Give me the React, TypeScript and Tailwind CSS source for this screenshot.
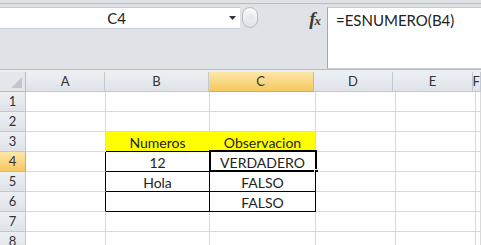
import React from 'react';

type Col = { key: string; w: string };

const cols: Col[] = [
  { key: 'A', w: 'w-[80px]' },
  { key: 'B', w: 'w-[104px]' },
  { key: 'C', w: 'w-[106px]' },
  { key: 'D', w: 'w-[80px]' },
  { key: 'E', w: 'w-[80px]' },
  { key: 'F', w: 'flex-1' },
];

const values: Record<string, string> = {
  B3: 'Numeros',
  C3: 'Observacion',
  B4: '12',
  C4: 'VERDADERO',
  B5: 'Hola',
  C5: 'FALSO',
  C6: 'FALSO',
};

const rows = [1, 2, 3, 4, 5, 6, 7, 8];

const cellClass = (row: number, col: string) => {
  const inBox = col === 'B' || col === 'C';
  const yellow = row === 3 && inBox;
  const bottomBlack = inBox && row >= 3 && row <= 6;
  const rightBlack = row >= 4 && row <= 6 && (col === 'A' || col === 'B' || col === 'C');
  const rightYellow = row === 3 && col === 'B';
  return [
    'h-full border-r border-b flex items-center justify-center pt-[1px]',
    yellow ? 'bg-[#ffff00]' : 'bg-white',
    bottomBlack ? 'border-b-black' : 'border-b-[#d9d9d9]',
    rightBlack ? 'border-r-black' : rightYellow ? 'border-r-[#ffff00]' : 'border-r-[#d9d9d9]',
  ].join(' ');
};

export default function App() {
  return (
    <div className="w-[481px] h-[245px] overflow-hidden bg-white font-['Lato',sans-serif] text-[#222]">
      {/* name box + formula bar */}
      <div className="h-[72px] flex flex-col bg-[#dfe3e8]">
        <div className="h-[4px] border-b border-[#b4bcc6]" />
        <div className="h-[3px]" />
        <div className="flex h-[62px]">
          <div className="w-[240px] flex flex-col">
            <div className="h-[22px] bg-white border-y border-[#c6ccd4] flex items-center">
              <span className="flex-1 text-center text-[15px] leading-none pl-[4px]">C4</span>
              <svg width="7" height="4" viewBox="0 0 7 4" className="mr-[4px]">
                <path d="M0 0h7L3.5 4z" fill="#333" />
              </svg>
            </div>
          </div>
          <div className="w-[87px] flex items-start">
            <div className="w-[16px] h-[21px] rounded-full border border-[#b7bec8] bg-gradient-to-b from-[#fafbfc] to-[#dde1e6] ml-[2px] flex items-center justify-center">
              <div className="w-[8px] h-[8px] rounded-full bg-[#e6e9ed]" />
            </div>
            <div className="flex-1" />
            <div className="h-[22px] flex items-center mr-[6px] font-['Liberation_Serif',serif] italic font-bold text-[#3a3a3a]">
              <span className="text-[19px] leading-none">f</span>
              <span className="text-[13px] leading-none mt-[4px] -ml-[1px]">x</span>
            </div>
          </div>
          <div className="flex-1 bg-white border-l border-[#9fa8b3] border-y border-y-[#c6ccd4] pl-[8px] pt-[3px] text-[15px] leading-[18px]">
            =ESNUMERO(B4)
          </div>
        </div>
        <div className="h-px bg-[#b4bcc6]" />
        <div className="h-[2px] bg-[#eceef1]" />
      </div>

      {/* column headers */}
      <div className="flex h-[20px] text-[13px] text-[#333]">
        <div className="w-[26px] h-full border-r border-b border-[#b8bec6] bg-[#e3e6ea] flex items-end justify-end p-[3px]">
          <svg width="11" height="11" viewBox="0 0 11 11">
            <path d="M11 0V11H0z" fill="#c2c7ce" />
          </svg>
        </div>
        {cols.map((c) => (
          <div
            key={c.key}
            className={`${c.w} h-full border-r border-b flex items-center justify-center ${
              c.key === 'C'
                ? 'bg-gradient-to-b from-[#fce6a6] to-[#f6c85e] border-r-[#e0b765] border-b-[#f0a532]'
                : 'bg-gradient-to-b from-[#edf0f3] to-[#dfe3e8] border-[#c2c8cf]'
            }`}
          >
            {c.key}
          </div>
        ))}
      </div>

      {/* rows */}
      {rows.map((r) => (
        <div key={r} className="flex h-[20px] relative">
          <div
            className={`w-[26px] h-full border-r border-b flex items-center justify-center text-[13px] text-[#333] ${
              r === 4
                ? 'bg-gradient-to-b from-[#fce6a6] to-[#f6c85e] border-b-[#e0b765] border-r-[#f0a532]'
                : 'bg-gradient-to-b from-[#edf0f3] to-[#dfe3e8] border-[#c2c8cf]'
            }`}
          >
            {r}
          </div>
          {cols.map((c) => (
            <div key={c.key} className={`${c.w} ${cellClass(r, c.key)} text-[14px]`}>
              {values[`${c.key}${r}`] ?? ''}
            </div>
          ))}
          {r === 4 && (
            <div className="absolute left-[209px] top-[-2px] w-[108px] h-[22px] border-2 border-black pointer-events-none">
              <div className="absolute right-[-4px] bottom-[-4px] w-[5px] h-[5px] bg-black border border-white" />
            </div>
          )}
        </div>
      ))}
    </div>
  );
}
